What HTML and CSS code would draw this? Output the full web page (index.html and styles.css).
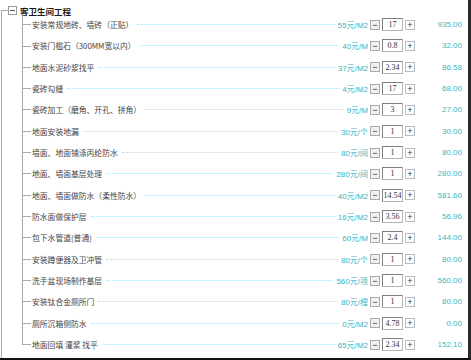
FILE: index.html
```html
<!DOCTYPE html>
<html>
<head>
<meta charset="utf-8">
<link rel="stylesheet" href="styles.css">
</head>
<body>
<div class="panel">
  <div class="node">
    <div class="head">
      <span class="stub"><span class="stub-top"></span><span class="stub-bot"></span></span>
      <span class="toggle"><span class="bar"></span></span>
      <span class="title">客卫生间工程</span>
    </div>
    <div class="children">
      <ul class="items">
        <li class="item"><span class="branch"><span class="b-top"></span><span class="b-bot"></span></span><span class="name">安装常规地砖、墙砖（正贴）</span><span class="leader"></span><span class="price">55元/M2</span><span class="btn">−</span><input class="qty" value="17"><span class="btn plus">+</span><span class="total">935.00</span></li>
        <li class="item"><span class="branch"><span class="b-top"></span><span class="b-bot"></span></span><span class="name">安装门槛石（300MM宽以内）</span><span class="leader"></span><span class="price">40元/M</span><span class="btn">−</span><input class="qty" value="0.8"><span class="btn plus">+</span><span class="total">32.00</span></li>
        <li class="item"><span class="branch"><span class="b-top"></span><span class="b-bot"></span></span><span class="name">地面水泥砂浆找平</span><span class="leader"></span><span class="price">37元/M2</span><span class="btn">−</span><input class="qty" value="2.34"><span class="btn plus">+</span><span class="total">86.58</span></li>
        <li class="item"><span class="branch"><span class="b-top"></span><span class="b-bot"></span></span><span class="name">瓷砖勾缝</span><span class="leader"></span><span class="price">4元/M2</span><span class="btn">−</span><input class="qty" value="17"><span class="btn plus">+</span><span class="total">68.00</span></li>
        <li class="item"><span class="branch"><span class="b-top"></span><span class="b-bot"></span></span><span class="name">瓷砖加工（磨角、开孔、拼角）</span><span class="leader"></span><span class="price">9元/M</span><span class="btn">−</span><input class="qty" value="3"><span class="btn plus">+</span><span class="total">27.00</span></li>
        <li class="item"><span class="branch"><span class="b-top"></span><span class="b-bot"></span></span><span class="name">地面安装地漏</span><span class="leader"></span><span class="price">30元/个</span><span class="btn">−</span><input class="qty" value="1"><span class="btn plus">+</span><span class="total">30.00</span></li>
        <li class="item"><span class="branch"><span class="b-top"></span><span class="b-bot"></span></span><span class="name">墙面、地面铺涤丙纶防水</span><span class="leader"></span><span class="price">80元/间</span><span class="btn">−</span><input class="qty" value="1"><span class="btn plus">+</span><span class="total">80.00</span></li>
        <li class="item"><span class="branch"><span class="b-top"></span><span class="b-bot"></span></span><span class="name">地面、墙面基层处理</span><span class="leader"></span><span class="price">280元/间</span><span class="btn">−</span><input class="qty" value="1"><span class="btn plus">+</span><span class="total">280.00</span></li>
        <li class="item"><span class="branch"><span class="b-top"></span><span class="b-bot"></span></span><span class="name">地面、墙面做防水（柔性防水）</span><span class="leader"></span><span class="price">40元/M2</span><span class="btn">−</span><input class="qty" value="14.54"><span class="btn plus">+</span><span class="total">581.60</span></li>
        <li class="item"><span class="branch"><span class="b-top"></span><span class="b-bot"></span></span><span class="name">防水面做保护层</span><span class="leader"></span><span class="price">16元/M2</span><span class="btn">−</span><input class="qty" value="3.56"><span class="btn plus">+</span><span class="total">56.96</span></li>
        <li class="item"><span class="branch"><span class="b-top"></span><span class="b-bot"></span></span><span class="name">包下水管道(普通)</span><span class="leader"></span><span class="price">60元/M</span><span class="btn">−</span><input class="qty" value="2.4"><span class="btn plus">+</span><span class="total">144.00</span></li>
        <li class="item"><span class="branch"><span class="b-top"></span><span class="b-bot"></span></span><span class="name">安装蹲便器及卫冲管</span><span class="leader"></span><span class="price">80元/个</span><span class="btn">−</span><input class="qty" value="1"><span class="btn plus">+</span><span class="total">80.00</span></li>
        <li class="item"><span class="branch"><span class="b-top"></span><span class="b-bot"></span></span><span class="name">洗手盆现场制作基层</span><span class="leader"></span><span class="price">560元/项</span><span class="btn">−</span><input class="qty" value="1"><span class="btn plus">+</span><span class="total">560.00</span></li>
        <li class="item"><span class="branch"><span class="b-top"></span><span class="b-bot"></span></span><span class="name">安装钛合金厕所门</span><span class="leader"></span><span class="price">80元/樘</span><span class="btn">−</span><input class="qty" value="1"><span class="btn plus">+</span><span class="total">80.00</span></li>
        <li class="item"><span class="branch"><span class="b-top"></span><span class="b-bot"></span></span><span class="name">厕所沉箱侧防水</span><span class="leader"></span><span class="price">0元/M2</span><span class="btn">−</span><input class="qty" value="4.78"><span class="btn plus">+</span><span class="total">0.00</span></li>
        <li class="item"><span class="branch"><span class="b-top"></span><span class="b-bot"></span></span><span class="name">地面回填 灌浆 找平</span><span class="leader"></span><span class="price">65元/M2</span><span class="btn">−</span><input class="qty" value="2.34"><span class="btn plus">+</span><span class="total">152.10</span></li>
      </ul>
    </div>
  </div>
</div>
</body>
</html>
```
FILE: styles.css
```css
html, body {
  margin: 0;
  padding: 0;
  background: #fff;
}
.panel {
  width: 471px;
  height: 360px;
  box-sizing: border-box;
  border-right: 3px solid #2a2a2a;
  border-bottom: 2px solid #111;
  display: flex;
  flex-direction: column;
  font-family: "Liberation Sans", "Noto Sans CJK SC", sans-serif;
}
.node {
  flex: 1;
  display: flex;
  flex-direction: column;
  margin-left: 1px;
}
.head {
  height: 14px;
  padding-top: 7px;
  box-sizing: border-box;
  display: flex;
  align-items: center;
}
.stub {
  align-self: stretch;
  width: 7px;
  flex: none;
  display: flex;
  flex-direction: column;
}
.stub-top {
  height: 3px;
  border-bottom: 1px solid #aaa;
}
.stub-bot {
  flex: 1;
  border-left: 1px solid #aaa;
}
.toggle {
  flex: none;
  width: 7px;
  height: 7px;
  border: 1px solid #9a9a9a;
  background: #fff;
  display: flex;
  align-items: center;
  justify-content: center;
}
.bar {
  width: 5px;
  height: 1px;
  background: #555;
}
.title {
  margin-left: 3px;
  font-family: "Noto Sans CJK SC", sans-serif;
  font-weight: bold;
  font-size: 8.5px;
  line-height: 8px;
  color: #1a1a1a;
  white-space: nowrap;
}
.children {
  flex: 1;
  border-left: 1px solid #aaa;
  padding-left: 20px;
}
.items {
  list-style: none;
  margin: 0;
  padding: 0;
}
.item {
  height: 21.33px;
  display: flex;
  align-items: center;
  padding-right: 6px;
}
.branch {
  align-self: stretch;
  width: 9px;
  flex: none;
  display: flex;
  flex-direction: column;
  box-sizing: border-box;
}
.b-top {
  flex: 1;
  border-left: 1px solid #aaa;
  border-bottom: 1px solid #aaa;
}
.b-bot {
  flex: 1;
  border-left: 1px solid #aaa;
}
.item:last-child .b-bot {
  border-left-color: transparent;
}
.name {
  margin-left: 1px;
  font-family: "Noto Sans CJK SC", sans-serif;
  font-size: 7.8px;
  color: #444;
  white-space: nowrap;
}
.leader {
  flex: 1;
  min-width: 10px;
  height: 0;
  border-top: 1px dotted #b0e0ec;
  margin: 0 3px 0 4px;
}
.price {
  font-size: 8px;
  color: #36b4c4;
  white-space: nowrap;
}
.btn {
  flex: none;
  width: 8px;
  height: 8px;
  margin-left: 2px;
  border: 1px solid #aaa;
  background: #f0f0f0;
  font-size: 9px;
  line-height: 8px;
  text-align: center;
  color: #333;
}
.btn.plus {
  background: #fff;
  border-color: #bbb;
}
.qty {
  flex: none;
  width: 21px;
  height: 13px;
  box-sizing: border-box;
  margin: 0 0 0 2px;
  padding: 0;
  border: 1px solid #b5b5b5;
  border-top-color: #808080;
  border-left-color: #808080;
  font-family: "Liberation Serif", serif;
  font-size: 8px;
  text-align: center;
  color: #333;
  background: #fff;
}
.total {
  flex: none;
  width: 47px;
  text-align: right;
  font-size: 8px;
  color: #3cb6c2;
}
```
